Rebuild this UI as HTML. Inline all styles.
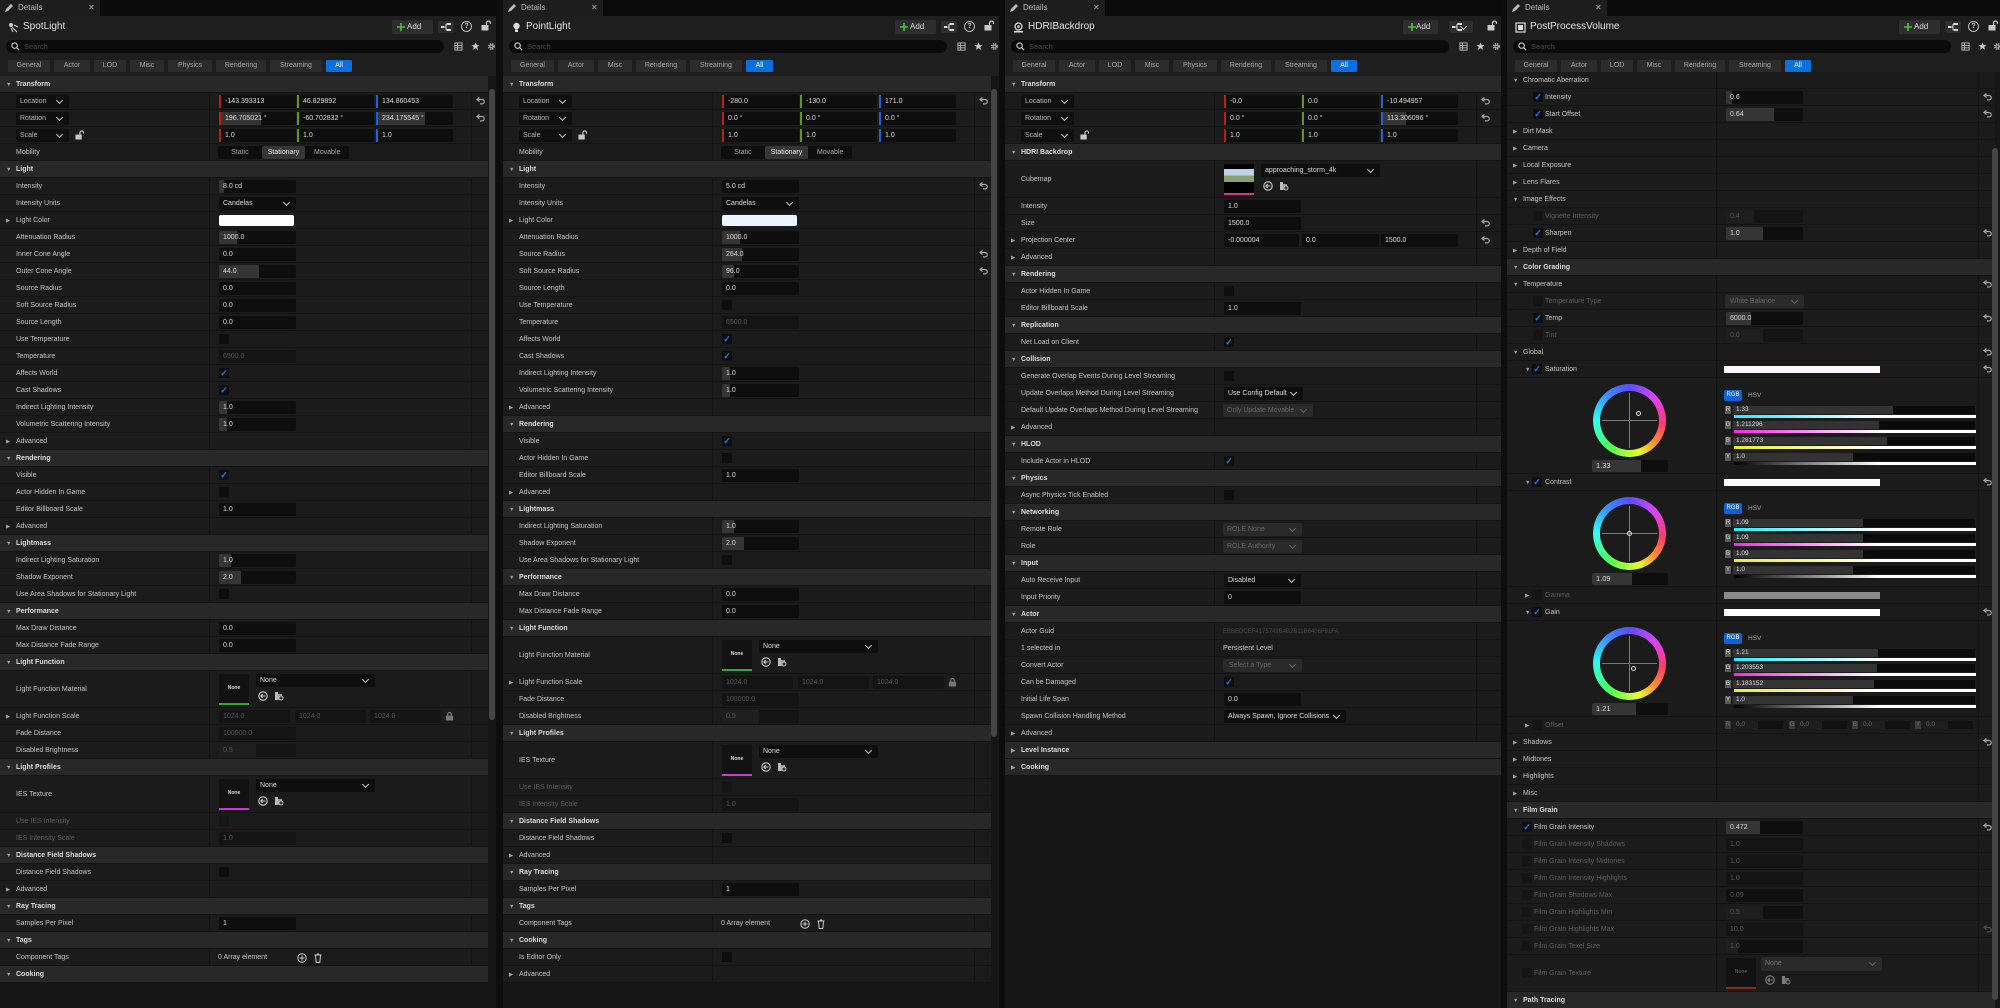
<!DOCTYPE html>
<html><head><meta charset="utf-8">
<style>
*{margin:0;padding:0;box-sizing:border-box}
body{width:2000px;height:1008px;background:#0d0d0d;overflow:hidden;font-family:"Liberation Sans",sans-serif;font-size:7px;color:#c4c4c4;position:relative}
.p{position:absolute;top:0;width:496px;height:1008px;background:#161616;overflow:hidden}
.tb{position:absolute;left:0;top:0;right:0;height:16px;background:#0b0b0b}
.tab{position:absolute;left:0;top:0;width:100px;height:16px;background:#1d1d1d;color:#bbb;font-size:8px;line-height:15px;padding-left:18px}
.tab .pc{position:absolute;left:4px;top:3px;width:10px;height:10px}
.tab .cl{position:absolute;left:88px;top:0;color:#aaa;font-size:8px}
.top{position:absolute;top:16px;left:0;right:0;height:60px;background:#1e1e1e;z-index:2}
.ttl{position:absolute;left:23px;top:4px;font-size:10px;color:#e2e2e2;line-height:14px}
.tic{position:absolute;left:8px;top:6px;width:11px;height:11px}
.add{position:absolute;left:392px;top:4px;width:41px;height:14px;background:#2d2d2d;border-radius:2px;font-size:8px;line-height:14px;color:#ddd;padding-left:15px}
.add svg{position:absolute;left:5px;top:3px;width:8px;height:8px}
.hi{position:absolute;left:438px;top:5px;width:16px;height:12px;background:#2d2d2d;border-radius:2px}
.hi svg{position:absolute;left:3px;top:2px;width:10px;height:8px}
.qm{position:absolute;left:461px;top:5px;width:11px;height:11px;border:1.2px solid #bbb;border-radius:50%;font-size:7px;line-height:9px;text-align:center;color:#ccc;font-weight:bold}
.tlk{position:absolute;left:481px;top:4px;width:10px;height:11px}
.srch{position:absolute;left:6px;top:24px;width:438px;height:13px;background:#0b0b0b;border-radius:7px;color:#4a4a4a;font-size:7.5px;line-height:13px;padding-left:18px}
.srch svg{position:absolute;left:5px;top:2px;width:9px;height:9px}
.si{position:absolute;top:26px;width:9px;height:9px}
.flt{position:absolute;top:44px;left:8px;display:flex;gap:4px}
.flt span{height:12px;line-height:12px;background:#2b2b2b;color:#a8a8a8;font-size:7px;text-align:center;border-radius:1px}
.flt span.al{background:#0a6fe0;color:#fff}
.rows{position:absolute;top:76px;left:0;width:488px}
.r{position:relative;height:17px;line-height:18px;padding-left:16px;white-space:nowrap;background:#1b1b1b linear-gradient(90deg,transparent 209px,#131313 209px,#131313 210px,transparent 210px,transparent 471px,#131313 471px,#131313 472px,transparent 472px);border-bottom:1px solid #141414}
.t{height:37px;line-height:38px}
.h{background:#282828;font-weight:bold;color:#dcdcdc}
.r>i{position:absolute;left:6px;top:0;font-style:normal;font-size:5.5px;color:#a0a0a0}
.dm{color:#5c5c5c}
.f{position:absolute;left:219px;top:2px;width:77px;height:13px;line-height:13px;background:#0e0e0e;border-radius:2px;padding-left:4px;color:#dcdcdc;font-weight:normal}
.f.dm{color:#555;background:#141414}
.a1{left:219px;border-left:2px solid #b32310;border-radius:0 2px 2px 0}
.a2{left:297px;border-left:2px solid #5d9a12;border-radius:0 2px 2px 0}
.a3{left:376px;border-left:2px solid #1d63d6;border-radius:0 2px 2px 0}
.d::after{content:"";position:absolute;right:7px;top:3px;width:4px;height:4px;border-right:1.3px solid #ccc;border-bottom:1.3px solid #ccc;transform:rotate(45deg)}
.d.dm{background:#2a2a2a}
.d.dm::after{border-color:#666}
.b{position:absolute;left:16px;top:2px;width:53px;height:13px;line-height:13px;background:#0f0f0f;border-radius:2px;padding-left:4px;color:#bbb}
.c{position:absolute;left:219px;top:3px;width:10px;height:10px;background:#0e0e0e;border-radius:1px;line-height:10px;text-align:center;color:#1f7ef0;font-weight:bold;font-size:9px}
.c.dm{background:#151515}
.x{position:absolute;left:475px;top:4px;width:10px;height:9px}
.wb{position:absolute;left:219px;top:3px;width:75px;height:11px;background:#fff;border-radius:2px}
.seg{position:absolute;left:218px;top:2px;width:131px;height:13px;background:#0e0e0e;display:flex;border-radius:2px;line-height:13px}
.seg span{flex:1;text-align:center;color:#aaa}
.seg span.on{background:#363636;color:#eee;border-radius:2px}
.th{position:absolute;left:219px;top:3px;width:30px;height:31px;background:#121212;border-bottom:2px solid #33a83a;font-size:5px;color:#ddd;text-align:center;line-height:28px;font-weight:bold}
.tf{left:256px;top:3px;width:119px}
.ib{position:absolute;top:20px;width:10px;height:10px}
.sb{position:absolute;width:6px;background:#454545;border-radius:3px}
.txt{position:absolute;left:218px;top:0}
.w{position:relative;height:96px;background:#1b1b1b linear-gradient(90deg,transparent 209px,#131313 209px,#131313 210px,transparent 210px,transparent 471px,#131313 471px,#131313 472px,transparent 472px);border-bottom:1px solid #141414}
.wh{position:absolute;left:86px;top:6px;width:73px;height:73px;border-radius:50%;background:conic-gradient(#5a4cff,#d644ff 45deg,#ff3a70 95deg,#ff8a2a 130deg,#e6ff30 165deg,#50ff50 215deg,#30ffee 270deg,#3a8cff 320deg,#5a4cff)}
.wh::after{content:"";position:absolute;left:7px;top:7px;width:59px;height:59px;border-radius:50%;background:#1b1b1b}
.hl{position:absolute;left:95px;top:42px;width:55px;height:1px;background:#7a7a7a;z-index:1}
.vl{position:absolute;left:122px;top:15px;width:1px;height:55px;background:#7a7a7a;z-index:1}
.dot{position:absolute;width:5px;height:5px;border:1px solid #ddd;border-radius:50%;z-index:2}
.wv{position:absolute;left:85px;top:82px;width:76px;height:12px;line-height:12px;padding-left:4px;color:#ddd;border-radius:2px;font-size:7.5px}
.rgb{position:absolute;left:217px;top:12px;width:18px;height:11px;background:#0a64d8;color:#fff;font-size:6px;text-align:center;line-height:11px;border-radius:2px}
.hsv{position:absolute;left:241px;top:12px;line-height:11px;color:#aaa;font-size:6.5px}
.sl{position:absolute;left:218px;width:250px;height:13px;line-height:8px}
.sl .lb{position:absolute;left:0;top:0;width:6px;height:8px;background:#5a5a5a;color:#ddd;font-size:6px;line-height:8px;text-align:center}
.sl .bar{position:absolute;left:8px;top:0;width:242px;height:8px;background:#0b0b0b;line-height:8px;padding-left:3px;color:#ddd;font-size:6.5px}
.sl .cb{position:absolute;left:9px;top:9px;width:242px;height:3px}
.wbar{position:absolute;left:217px;top:5px;width:156px;height:7px;background:#fff}
</style></head><body>
<svg width="0" height="0" style="position:absolute">
<defs>
<symbol id="rs" viewBox="0 0 10 9"><path d="M3.5 2.5H7a2.2 2.2 0 0 1 0 4.4H5" stroke="#a8a8a8" stroke-width="1.2" fill="none"/><path d="M4.5 0.5L2 2.5l2.5 2" stroke="#a8a8a8" stroke-width="1.2" fill="none"/></symbol>
<symbol id="lk" viewBox="0 0 10 11"><rect x="0.5" y="5" width="7" height="5.5" fill="#c8c8c8"/><path d="M5.5 5V3a2 2 0 0 1 4 0v1" stroke="#c8c8c8" stroke-width="1.3" fill="none"/></symbol>
<symbol id="lc" viewBox="0 0 10 11"><rect x="1" y="5" width="8" height="5.5" fill="#777"/><path d="M3 5V3.5a2 2 0 0 1 4 0V5" stroke="#777" stroke-width="1.3" fill="none"/></symbol>
<symbol id="br" viewBox="0 0 10 10"><circle cx="5" cy="5" r="4.2" stroke="#ccc" stroke-width="1.1" fill="none"/><path d="M7.5 5H3M4.8 3L2.8 5l2 2" stroke="#ccc" stroke-width="1.1" fill="none"/></symbol>
<symbol id="fo" viewBox="0 0 10 10"><path d="M1 1h3v8H1z" fill="#bbb"/><rect x="4" y="3" width="4" height="6" fill="#999"/><circle cx="7" cy="7" r="2" stroke="#ddd" fill="#333" stroke-width="0.8"/></symbol>
<symbol id="pl" viewBox="0 0 10 10"><circle cx="5" cy="5" r="4.2" stroke="#ccc" stroke-width="1" fill="none"/><path d="M5 2.5v5M2.5 5h5" stroke="#ccc" stroke-width="1"/></symbol>
<symbol id="tr" viewBox="0 0 10 10"><path d="M1.5 2h7M4 1h2M2.5 2.5l.7 7h3.6l.7-7" stroke="#ccc" stroke-width="1" fill="none"/></symbol>
<symbol id="pn" viewBox="0 0 10 10"><path d="M1 9l1-3 5-5 2 2-5 5z" fill="#bbb"/></symbol>
<symbol id="sr" viewBox="0 0 10 10"><circle cx="4" cy="4" r="3" stroke="#ccc" stroke-width="1.2" fill="none"/><path d="M6.2 6.2L9 9" stroke="#ccc" stroke-width="1.3"/></symbol>
<symbol id="gr" viewBox="0 0 10 10"><rect x="1" y="1" width="8" height="8" stroke="#bbb" fill="none"/><path d="M1 4h8M1 6.5h8M4 1v8" stroke="#bbb"/></symbol>
<symbol id="st" viewBox="0 0 10 10"><path d="M5 .5l1.3 3h3.2l-2.6 2 1 3.2L5 6.8 2.1 8.7l1-3.2-2.6-2h3.2z" fill="#c8c8c8"/></symbol>
<symbol id="ge" viewBox="0 0 10 10"><circle cx="5" cy="5" r="3" stroke="#bbb" stroke-width="1.6" fill="none" stroke-dasharray="1.4 1"/><circle cx="5" cy="5" r="1.6" stroke="#bbb" fill="none"/></symbol>
<symbol id="ad" viewBox="0 0 8 8"><path d="M4 0v8M0 4h8" stroke="#4cc43c" stroke-width="1.6"/></symbol>
<symbol id="hr" viewBox="0 0 10 8"><rect x="0" y="3" width="3" height="2" fill="#ddd"/><rect x="6" y="0" width="4" height="2" fill="#ddd"/><rect x="6" y="6" width="4" height="2" fill="#ddd"/><path d="M3 4h2M5 1v6M5 1h1M5 7h1" stroke="#ddd"/></symbol>
</defs></svg>

<!-- PANEL 1 -->
<div class="p" style="left:0">
<div class="tb"><div class="tab"><svg class="pc"><use href="#pn"/></svg>Details<span class="cl">✕</span></div></div>
<div class="top">
<svg class="tic" viewBox="0 0 11 11"><circle cx="3" cy="3" r="2" fill="#ccc"/><path d="M4 5l5 5M6 3l4 2M3 6l2 4" stroke="#ccc"/></svg>
<div class="ttl">SpotLight</div>
<div class="add"><svg><use href="#ad"/></svg>Add</div><div class="hi"><svg><use href="#hr"/></svg></div><div class="qm">?</div><svg class="tlk"><use href="#lk"/></svg>
<div class="srch"><svg><use href="#sr"/></svg>Search</div>
<svg class="si" style="left:454px"><use href="#gr"/></svg><svg class="si" style="left:471px"><use href="#st"/></svg><svg class="si" style="left:487px"><use href="#ge"/></svg>
<div class="flt"><span style="width:42px">General</span><span style="width:36px">Actor</span><span style="width:32px">LOD</span><span style="width:34px">Misc</span><span style="width:44px">Physics</span><span style="width:50px">Rendering</span><span style="width:52px">Streaming</span><span class="al" style="width:26px">All</span></div>
</div>
<div class="rows">
<div class="r h"><i>▼</i>Transform</div>
<div class="r"><span class="b d">Location</span><span class="f a1">-143.393313</span><span class="f a2">46.829892</span><span class="f a3">134.860453</span><svg class="x"><use href="#rs"/></svg></div>
<div class="r"><span class="b d">Rotation</span><span class="f a1" style="background:linear-gradient(90deg,#353535 40px,#0e0e0e 40px)">196.705021 °</span><span class="f a2">-60.702832 °</span><span class="f a3" style="background:linear-gradient(90deg,#353535 47px,#0e0e0e 47px)">234.175545 °</span><svg class="x"><use href="#rs"/></svg></div>
<div class="r"><span class="b d">Scale</span><svg style="position:absolute;left:75px;top:3px;width:9px;height:10px"><use href="#lk"/></svg><span class="f a1">1.0</span><span class="f a2">1.0</span><span class="f a3">1.0</span></div>
<div class="r">Mobility<span class="seg"><span>Static</span><span class="on">Stationary</span><span>Movable</span></span></div>
<div class="r h"><i>▼</i>Light</div>
<div class="r">Intensity<span class="f" style="background:linear-gradient(90deg,#353535 5px,#0e0e0e 5px)">8.0 cd</span></div>
<div class="r">Intensity Units<span class="f d">Candelas</span></div>
<div class="r"><i>▶</i>Light Color<span class="wb"></span></div>
<div class="r">Attenuation Radius<span class="f" style="background:linear-gradient(90deg,#353535 18px,#0e0e0e 18px)">1000.0</span></div>
<div class="r">Inner Cone Angle<span class="f">0.0</span></div>
<div class="r">Outer Cone Angle<span class="f" style="background:linear-gradient(90deg,#353535 40px,#0e0e0e 40px)">44.0</span></div>
<div class="r">Source Radius<span class="f">0.0</span></div>
<div class="r">Soft Source Radius<span class="f">0.0</span></div>
<div class="r">Source Length<span class="f">0.0</span></div>
<div class="r">Use Temperature<span class="c"></span></div>
<div class="r">Temperature<span class="f dm">6500.0</span></div>
<div class="r">Affects World<span class="c">✓</span></div>
<div class="r">Cast Shadows<span class="c">✓</span></div>
<div class="r">Indirect Lighting Intensity<span class="f" style="background:linear-gradient(90deg,#353535 8px,#0e0e0e 8px)">1.0</span></div>
<div class="r">Volumetric Scattering Intensity<span class="f" style="background:linear-gradient(90deg,#353535 8px,#0e0e0e 8px)">1.0</span></div>
<div class="r"><i>▶</i>Advanced</div>
<div class="r h"><i>▼</i>Rendering</div>
<div class="r">Visible<span class="c">✓</span></div>
<div class="r">Actor Hidden In Game<span class="c"></span></div>
<div class="r">Editor Billboard Scale<span class="f">1.0</span></div>
<div class="r"><i>▶</i>Advanced</div>
<div class="r h"><i>▼</i>Lightmass</div>
<div class="r">Indirect Lighting Saturation<span class="f" style="background:linear-gradient(90deg,#353535 12px,#0e0e0e 12px)">1.0</span></div>
<div class="r">Shadow Exponent<span class="f" style="background:linear-gradient(90deg,#353535 22px,#0e0e0e 22px)">2.0</span></div>
<div class="r">Use Area Shadows for Stationary Light<span class="c"></span></div>
<div class="r h"><i>▼</i>Performance</div>
<div class="r">Max Draw Distance<span class="f">0.0</span></div>
<div class="r">Max Distance Fade Range<span class="f">0.0</span></div>
<div class="r h"><i>▼</i>Light Function</div>
<div class="r t">Light Function Material<span class="th">None</span><span class="f d tf">None</span><svg class="ib" style="left:258px"><use href="#br"/></svg><svg class="ib" style="left:274px"><use href="#fo"/></svg></div>
<div class="r"><i>▶</i>Light Function Scale<span class="f dm" style="width:71px">1024.0</span><span class="f dm" style="left:295px;width:71px">1024.0</span><span class="f dm" style="left:370px;width:71px">1024.0</span><svg style="position:absolute;left:445px;top:3px;width:9px;height:10px"><use href="#lc"/></svg></div>
<div class="r">Fade Distance<span class="f dm">100000.0</span></div>
<div class="r">Disabled Brightness<span class="f dm" style="background:linear-gradient(90deg,#1e1e1e 37px,#141414 37px)">0.5</span></div>
<div class="r h"><i>▼</i>Light Profiles</div>
<div class="r t">IES Texture<span class="th" style="border-color:#c83ad0">None</span><span class="f d tf">None</span><svg class="ib" style="left:258px"><use href="#br"/></svg><svg class="ib" style="left:274px"><use href="#fo"/></svg></div>
<div class="r dm">Use IES Intensity<span class="c dm"></span></div>
<div class="r dm">IES Intensity Scale<span class="f dm">1.0</span></div>
<div class="r h"><i>▼</i>Distance Field Shadows</div>
<div class="r">Distance Field Shadows<span class="c"></span></div>
<div class="r"><i>▶</i>Advanced</div>
<div class="r h"><i>▼</i>Ray Tracing</div>
<div class="r">Samples Per Pixel<span class="f">1</span></div>
<div class="r h"><i>▼</i>Tags</div>
<div class="r">Component Tags<span class="txt">0 Array element</span><svg class="ib" style="left:297px;top:4px"><use href="#pl"/></svg><svg class="ib" style="left:313px;top:4px"><use href="#tr"/></svg></div>
<div class="r h"><i>▼</i>Cooking</div>
</div>
<div class="sb" style="left:489px;top:89px;height:631px"></div>
</div>

<!-- PANEL 2 -->
<div class="p" style="left:503px">
<div class="tb"><div class="tab"><svg class="pc"><use href="#pn"/></svg>Details<span class="cl">✕</span></div></div>
<div class="top">
<svg class="tic" viewBox="0 0 11 11"><circle cx="5.5" cy="4" r="3.2" fill="#ddd"/><rect x="4" y="7.5" width="3" height="2.5" fill="#ddd"/></svg>
<div class="ttl">PointLight</div>
<div class="add"><svg><use href="#ad"/></svg>Add</div><div class="hi"><svg><use href="#hr"/></svg></div><div class="qm">?</div><svg class="tlk"><use href="#lk"/></svg>
<div class="srch"><svg><use href="#sr"/></svg>Search</div>
<svg class="si" style="left:454px"><use href="#gr"/></svg><svg class="si" style="left:471px"><use href="#st"/></svg><svg class="si" style="left:487px"><use href="#ge"/></svg>
<div class="flt"><span style="width:43px">General</span><span style="width:36px">Actor</span><span style="width:34px">Misc</span><span style="width:50px">Rendering</span><span style="width:52px">Streaming</span><span class="al" style="width:27px">All</span></div>
</div>
<div class="rows">
<div class="r h"><i>▼</i>Transform</div>
<div class="r"><span class="b d">Location</span><span class="f a1">-280.0</span><span class="f a2">-130.0</span><span class="f a3">171.0</span><svg class="x"><use href="#rs"/></svg></div>
<div class="r"><span class="b d">Rotation</span><span class="f a1">0.0 °</span><span class="f a2">0.0 °</span><span class="f a3">0.0 °</span></div>
<div class="r"><span class="b d">Scale</span><svg style="position:absolute;left:75px;top:3px;width:9px;height:10px"><use href="#lk"/></svg><span class="f a1">1.0</span><span class="f a2">1.0</span><span class="f a3">1.0</span></div>
<div class="r">Mobility<span class="seg"><span>Static</span><span class="on">Stationary</span><span>Movable</span></span></div>
<div class="r h"><i>▼</i>Light</div>
<div class="r">Intensity<span class="f">5.0 cd</span><svg class="x"><use href="#rs"/></svg></div>
<div class="r">Intensity Units<span class="f d">Candelas</span></div>
<div class="r"><i>▶</i>Light Color<span class="wb" style="background:#eef4ff"></span></div>
<div class="r">Attenuation Radius<span class="f" style="background:linear-gradient(90deg,#353535 18px,#0e0e0e 18px)">1000.0</span></div>
<div class="r">Source Radius<span class="f" style="background:linear-gradient(90deg,#353535 20px,#0e0e0e 20px)">264.0</span><svg class="x"><use href="#rs"/></svg></div>
<div class="r">Soft Source Radius<span class="f" style="background:linear-gradient(90deg,#353535 12px,#0e0e0e 12px)">96.0</span><svg class="x"><use href="#rs"/></svg></div>
<div class="r">Source Length<span class="f">0.0</span></div>
<div class="r">Use Temperature<span class="c"></span></div>
<div class="r">Temperature<span class="f dm">6500.0</span></div>
<div class="r">Affects World<span class="c">✓</span></div>
<div class="r">Cast Shadows<span class="c">✓</span></div>
<div class="r">Indirect Lighting Intensity<span class="f" style="background:linear-gradient(90deg,#353535 8px,#0e0e0e 8px)">1.0</span></div>
<div class="r">Volumetric Scattering Intensity<span class="f" style="background:linear-gradient(90deg,#353535 8px,#0e0e0e 8px)">1.0</span></div>
<div class="r"><i>▶</i>Advanced</div>
<div class="r h"><i>▼</i>Rendering</div>
<div class="r">Visible<span class="c">✓</span></div>
<div class="r">Actor Hidden In Game<span class="c"></span></div>
<div class="r">Editor Billboard Scale<span class="f">1.0</span></div>
<div class="r"><i>▶</i>Advanced</div>
<div class="r h"><i>▼</i>Lightmass</div>
<div class="r">Indirect Lighting Saturation<span class="f" style="background:linear-gradient(90deg,#353535 12px,#0e0e0e 12px)">1.0</span></div>
<div class="r">Shadow Exponent<span class="f" style="background:linear-gradient(90deg,#353535 22px,#0e0e0e 22px)">2.0</span></div>
<div class="r">Use Area Shadows for Stationary Light<span class="c"></span></div>
<div class="r h"><i>▼</i>Performance</div>
<div class="r">Max Draw Distance<span class="f">0.0</span></div>
<div class="r">Max Distance Fade Range<span class="f">0.0</span></div>
<div class="r h"><i>▼</i>Light Function</div>
<div class="r t">Light Function Material<span class="th">None</span><span class="f d tf">None</span><svg class="ib" style="left:258px"><use href="#br"/></svg><svg class="ib" style="left:274px"><use href="#fo"/></svg></div>
<div class="r"><i>▶</i>Light Function Scale<span class="f dm" style="width:71px">1024.0</span><span class="f dm" style="left:295px;width:71px">1024.0</span><span class="f dm" style="left:370px;width:71px">1024.0</span><svg style="position:absolute;left:445px;top:3px;width:9px;height:10px"><use href="#lc"/></svg></div>
<div class="r">Fade Distance<span class="f dm">100000.0</span></div>
<div class="r">Disabled Brightness<span class="f dm" style="background:linear-gradient(90deg,#1e1e1e 37px,#141414 37px)">0.5</span></div>
<div class="r h"><i>▼</i>Light Profiles</div>
<div class="r t">IES Texture<span class="th" style="border-color:#c83ad0">None</span><span class="f d tf">None</span><svg class="ib" style="left:258px"><use href="#br"/></svg><svg class="ib" style="left:274px"><use href="#fo"/></svg></div>
<div class="r dm">Use IES Intensity<span class="c dm"></span></div>
<div class="r dm">IES Intensity Scale<span class="f dm">1.0</span></div>
<div class="r h"><i>▼</i>Distance Field Shadows</div>
<div class="r">Distance Field Shadows<span class="c"></span></div>
<div class="r"><i>▶</i>Advanced</div>
<div class="r h"><i>▼</i>Ray Tracing</div>
<div class="r">Samples Per Pixel<span class="f">1</span></div>
<div class="r h"><i>▼</i>Tags</div>
<div class="r">Component Tags<span class="txt">0 Array element</span><svg class="ib" style="left:297px;top:4px"><use href="#pl"/></svg><svg class="ib" style="left:313px;top:4px"><use href="#tr"/></svg></div>
<div class="r h"><i>▼</i>Cooking</div>
<div class="r">Is Editor Only<span class="c"></span></div>
<div class="r"><i>▶</i>Advanced</div>
</div>
<div class="sb" style="left:488px;top:89px;height:648px"></div>
</div>

<!-- PANEL 3 -->
<div class="p" style="left:1005px">
<div class="tb"><div class="tab"><svg class="pc"><use href="#pn"/></svg>Details<span class="cl">✕</span></div></div>
<div class="top">
<svg class="tic" viewBox="0 0 11 11"><circle cx="5.5" cy="4.5" r="3.5" fill="none" stroke="#ddd" stroke-width="1.3"/><circle cx="5.5" cy="4.5" r="1.3" fill="#ddd"/><rect x="1" y="9" width="9" height="1.5" fill="#ddd"/></svg>
<div class="ttl">HDRIBackdrop</div>
<div class="add" style="left:398px;width:35px;padding-left:13px"><svg><use href="#ad"/></svg>Add</div><div class="hi" style="left:444px;width:24px"><svg><use href="#hr"/></svg><span class="d" style="position:absolute;left:12px;top:0;width:12px;height:12px"></span></div><svg class="tlk" style="left:482px"><use href="#lk"/></svg>
<div class="srch"><svg><use href="#sr"/></svg>Search</div>
<svg class="si" style="left:454px"><use href="#gr"/></svg><svg class="si" style="left:471px"><use href="#st"/></svg><svg class="si" style="left:487px"><use href="#ge"/></svg>
<div class="flt"><span style="width:42px">General</span><span style="width:36px">Actor</span><span style="width:32px">LOD</span><span style="width:34px">Misc</span><span style="width:44px">Physics</span><span style="width:50px">Rendering</span><span style="width:52px">Streaming</span><span class="al" style="width:26px">All</span></div>
</div>
<div class="rows" style="width:496px">
<div class="r h"><i>▼</i>Transform</div>
<div class="r"><span class="b d">Location</span><span class="f a1">-0.0</span><span class="f a2">0.0</span><span class="f a3">-10.494957</span><svg class="x"><use href="#rs"/></svg></div>
<div class="r"><span class="b d">Rotation</span><span class="f a1">0.0 °</span><span class="f a2">0.0 °</span><span class="f a3" style="background:linear-gradient(90deg,#353535 23px,#0e0e0e 23px)">113.306096 °</span><svg class="x"><use href="#rs"/></svg></div>
<div class="r"><span class="b d">Scale</span><svg style="position:absolute;left:75px;top:3px;width:9px;height:10px"><use href="#lk"/></svg><span class="f a1">1.0</span><span class="f a2">1.0</span><span class="f a3">1.0</span></div>
<div class="r h"><i>▼</i>HDRI Backdrop</div>
<div class="r t">Cubemap<span class="th" style="border-color:#d03a8a;background:linear-gradient(#000 0 18%,#bcd3ea 18% 40%,#8aa070 40% 62%,#000 62%)"></span><span class="f d tf">approaching_storm_4k</span><svg class="ib" style="left:258px"><use href="#br"/></svg><svg class="ib" style="left:274px"><use href="#fo"/></svg></div>
<div class="r">Intensity<span class="f">1.0</span></div>
<div class="r">Size<span class="f">1500.0</span><svg class="x"><use href="#rs"/></svg></div>
<div class="r"><i>▶</i>Projection Center<span class="f" style="width:75px">-0.000004</span><span class="f" style="left:297px;width:77px">0.0</span><span class="f" style="left:376px;width:77px">1500.0</span><svg class="x"><use href="#rs"/></svg></div>
<div class="r"><i>▶</i>Advanced</div>
<div class="r h"><i>▼</i>Rendering</div>
<div class="r">Actor Hidden In Game<span class="c"></span></div>
<div class="r">Editor Billboard Scale<span class="f">1.0</span></div>
<div class="r h"><i>▼</i>Replication</div>
<div class="r">Net Load on Client<span class="c">✓</span></div>
<div class="r h"><i>▼</i>Collision</div>
<div class="r">Generate Overlap Events During Level Streaming<span class="c"></span></div>
<div class="r">Update Overlaps Method During Level Streaming<span class="f d" style="width:79px">Use Config Default</span></div>
<div class="r">Default Update Overlaps Method During Level Streaming<span class="f d dm" style="width:90px;left:218px;color:#666">Only Update Movable</span></div>
<div class="r"><i>▶</i>Advanced</div>
<div class="r h"><i>▼</i>HLOD</div>
<div class="r">Include Actor in HLOD<span class="c">✓</span></div>
<div class="r h"><i>▼</i>Physics</div>
<div class="r">Async Physics Tick Enabled<span class="c"></span></div>
<div class="r h"><i>▼</i>Networking</div>
<div class="r">Remote Role<span class="f d dm" style="width:79px;left:218px;color:#666">ROLE None</span></div>
<div class="r">Role<span class="f d dm" style="width:79px;left:218px;color:#666">ROLE Authority</span></div>
<div class="r h"><i>▼</i>Input</div>
<div class="r">Auto Receive Input<span class="f d">Disabled</span></div>
<div class="r">Input Priority<span class="f">0</span></div>
<div class="r h"><i>▼</i>Actor</div>
<div class="r">Actor Guid<span class="txt" style="color:#4a4a4a;font-size:6px">EBBBDCEF4175749B4B2B11B6406F91FA</span></div>
<div class="r">1 selected in<span class="txt" style="color:#ccc">Persistent Level</span></div>
<div class="r">Convert Actor<span class="f d dm" style="width:79px;left:218px;color:#666;padding-left:6px">Select a Type</span></div>
<div class="r">Can be Damaged<span class="c">✓</span></div>
<div class="r">Initial Life Span<span class="f">0.0</span></div>
<div class="r">Spawn Collision Handling Method<span class="f d" style="width:122px">Always Spawn, Ignore Collisions</span></div>
<div class="r"><i>▶</i>Advanced</div>
<div class="r h"><i>▶</i>Level Instance</div>
<div class="r h"><i>▶</i>Cooking</div>
</div>
</div>

<!-- PANEL 4 -->
<div class="p" style="left:1507px;width:493px">
<div class="tb"><div class="tab"><svg class="pc"><use href="#pn"/></svg>Details<span class="cl">✕</span></div></div>
<div class="top" style="height:56px">
<svg class="tic" viewBox="0 0 11 11"><rect x="1" y="1" width="9" height="9" fill="none" stroke="#ddd" stroke-width="1.2"/><rect x="3" y="3" width="5" height="5" fill="#ddd"/></svg>
<div class="ttl">PostProcessVolume</div>
<div class="add"><svg><use href="#ad"/></svg>Add</div><div class="hi"><svg><use href="#hr"/></svg></div><div class="qm">?</div><svg class="tlk"><use href="#lk"/></svg>
<div class="srch"><svg><use href="#sr"/></svg>Search</div>
<svg class="si" style="left:454px"><use href="#gr"/></svg><svg class="si" style="left:471px"><use href="#st"/></svg><svg class="si" style="left:486px"><use href="#ge"/></svg>
<div class="flt"><span style="width:42px">General</span><span style="width:36px">Actor</span><span style="width:32px">LOD</span><span style="width:34px">Misc</span><span style="width:50px">Rendering</span><span style="width:52px">Streaming</span><span class="al" style="width:26px">All</span></div>
</div>
<div class="rows" style="top:72px">
<div class="r"><i>▼</i>Chromatic Aberration</div>
<div class="r" style="padding-left:38px"><span class="c" style="left:26px">✓</span>Intensity<span class="f" style="background:linear-gradient(90deg,#353535 6px,#0e0e0e 6px)">0.6</span><svg class="x"><use href="#rs"/></svg></div>
<div class="r" style="padding-left:38px"><span class="c" style="left:26px">✓</span>Start Offset<span class="f" style="background:linear-gradient(90deg,#353535 48px,#0e0e0e 48px)">0.64</span><svg class="x"><use href="#rs"/></svg></div>
<div class="r"><i>▶</i>Dirt Mask</div>
<div class="r"><i>▶</i>Camera</div>
<div class="r"><i>▶</i>Local Exposure</div>
<div class="r"><i>▶</i>Lens Flares</div>
<div class="r"><i>▼</i>Image Effects</div>
<div class="r dm" style="padding-left:38px"><span class="c dm" style="left:26px"></span>Vignette Intensity<span class="f dm" style="background:linear-gradient(90deg,#1e1e1e 28px,#141414 28px)">0.4</span></div>
<div class="r" style="padding-left:38px"><span class="c" style="left:26px">✓</span>Sharpen<span class="f" style="background:linear-gradient(90deg,#353535 37px,#0e0e0e 37px)">1.0</span><svg class="x"><use href="#rs"/></svg></div>
<div class="r"><i>▶</i>Depth of Field</div>
<div class="r h"><i>▼</i>Color Grading</div>
<div class="r"><i>▼</i>Temperature<svg class="x"><use href="#rs"/></svg></div>
<div class="r dm" style="padding-left:38px"><span class="c dm" style="left:26px"></span>Temperature Type<span class="f d dm" style="left:218px;width:79px;color:#666;padding-left:5px">White Balance</span></div>
<div class="r" style="padding-left:38px"><span class="c" style="left:26px">✓</span>Temp<span class="f" style="background:linear-gradient(90deg,#353535 25px,#0e0e0e 25px)">6000.0</span><svg class="x"><use href="#rs"/></svg></div>
<div class="r dm" style="padding-left:38px"><span class="c dm" style="left:26px"></span>Tint<span class="f dm" style="background:linear-gradient(90deg,#1e1e1e 37px,#141414 37px)">0.0</span></div>
<div class="r"><i>▼</i>Global<svg class="x"><use href="#rs"/></svg></div>
<div class="r" style="padding-left:38px"><i style="left:18px">▼</i><span class="c" style="left:25px">✓</span>Saturation<span class="wbar" style="background:#fff6fb"></span><svg class="x"><use href="#rs"/></svg></div>
<div class="w"><div class="wh"></div><div class="hl"></div><div class="vl"></div><div class="dot" style="left:129px;top:33px"></div>
<div class="wv" style="background:linear-gradient(90deg,#353535 49px,#0e0e0e 49px)">1.33</div>
<div class="rgb">RGB</div><div class="hsv">HSV</div>
<div class="sl" style="top:27.5px"><div class="lb">R</div><div class="bar" style="background:linear-gradient(90deg,#333 160px,#0b0b0b 160px)">1.33</div><div class="cb" style="background:linear-gradient(90deg,#2ef 0,#fff 60%)"></div></div>
<div class="sl" style="top:43.2px"><div class="lb">G</div><div class="bar" style="background:linear-gradient(90deg,#333 146px,#0b0b0b 146px)">1.211296</div><div class="cb" style="background:linear-gradient(90deg,#f2e 0,#fff 60%)"></div></div>
<div class="sl" style="top:58.9px"><div class="lb">B</div><div class="bar" style="background:linear-gradient(90deg,#333 154px,#0b0b0b 154px)">1.281773</div><div class="cb" style="background:linear-gradient(90deg,#ee2 0,#fff 60%)"></div></div>
<div class="sl" style="top:74.6px"><div class="lb">Y</div><div class="bar" style="background:linear-gradient(90deg,#333 120px,#0b0b0b 120px)">1.0</div><div class="cb" style="background:linear-gradient(90deg,#000 0,#fff 60%)"></div></div>
</div>
<div class="r" style="padding-left:38px"><i style="left:18px">▼</i><span class="c" style="left:25px">✓</span>Contrast<span class="wbar"></span><svg class="x"><use href="#rs"/></svg></div>
<div class="w"><div class="wh"></div><div class="hl"></div><div class="vl"></div><div class="dot" style="left:119.5px;top:39.5px"></div>
<div class="wv" style="background:linear-gradient(90deg,#353535 40px,#0e0e0e 40px)">1.09</div>
<div class="rgb">RGB</div><div class="hsv">HSV</div>
<div class="sl" style="top:27.5px"><div class="lb">R</div><div class="bar" style="background:linear-gradient(90deg,#333 130px,#0b0b0b 130px)">1.09</div><div class="cb" style="background:linear-gradient(90deg,#2ef 0,#fff 60%)"></div></div>
<div class="sl" style="top:43.2px"><div class="lb">G</div><div class="bar" style="background:linear-gradient(90deg,#333 130px,#0b0b0b 130px)">1.09</div><div class="cb" style="background:linear-gradient(90deg,#f2e 0,#fff 60%)"></div></div>
<div class="sl" style="top:58.9px"><div class="lb">B</div><div class="bar" style="background:linear-gradient(90deg,#333 130px,#0b0b0b 130px)">1.09</div><div class="cb" style="background:linear-gradient(90deg,#ee2 0,#fff 60%)"></div></div>
<div class="sl" style="top:74.6px"><div class="lb">Y</div><div class="bar" style="background:linear-gradient(90deg,#333 120px,#0b0b0b 120px)">1.0</div><div class="cb" style="background:linear-gradient(90deg,#000 0,#fff 60%)"></div></div>
</div>
<div class="r dm" style="padding-left:38px"><i style="left:18px">▶</i><span class="c dm" style="left:25px"></span>Gamma<span class="wbar" style="background:#8a8a8a"></span></div>
<div class="r" style="padding-left:38px"><i style="left:18px">▼</i><span class="c" style="left:25px">✓</span>Gain<span class="wbar"></span><svg class="x"><use href="#rs"/></svg></div>
<div class="w"><div class="wh"></div><div class="hl"></div><div class="vl"></div><div class="dot" style="left:124px;top:45px"></div>
<div class="wv" style="background:linear-gradient(90deg,#353535 44px,#0e0e0e 44px)">1.21</div>
<div class="rgb">RGB</div><div class="hsv">HSV</div>
<div class="sl" style="top:27.5px"><div class="lb">R</div><div class="bar" style="background:linear-gradient(90deg,#333 145px,#0b0b0b 145px)">1.21</div><div class="cb" style="background:linear-gradient(90deg,#2ef 0,#fff 60%)"></div></div>
<div class="sl" style="top:43.2px"><div class="lb">G</div><div class="bar" style="background:linear-gradient(90deg,#333 144px,#0b0b0b 144px)">1.203553</div><div class="cb" style="background:linear-gradient(90deg,#f2e 0,#fff 60%)"></div></div>
<div class="sl" style="top:58.9px"><div class="lb">B</div><div class="bar" style="background:linear-gradient(90deg,#333 141px,#0b0b0b 141px)">1.183152</div><div class="cb" style="background:linear-gradient(90deg,#ee2 0,#fff 60%)"></div></div>
<div class="sl" style="top:74.6px"><div class="lb">Y</div><div class="bar" style="background:linear-gradient(90deg,#333 120px,#0b0b0b 120px)">1.0</div><div class="cb" style="background:linear-gradient(90deg,#000 0,#fff 60%)"></div></div>
</div>
<div class="r dm" style="padding-left:38px"><i style="left:18px">▶</i><span class="c dm" style="left:25px"></span>Offset
<span class="sl" style="top:4px;width:58px"><span class="lb" style="background:#3a3a3a;color:#777">R</span><span class="bar" style="width:50px;color:#666;background:linear-gradient(90deg,#1e1e1e 25px,#121212 25px)">0.0</span></span>
<span class="sl" style="top:4px;left:282px;width:58px"><span class="lb" style="background:#3a3a3a;color:#777">G</span><span class="bar" style="width:50px;color:#666;background:linear-gradient(90deg,#1e1e1e 25px,#121212 25px)">0.0</span></span>
<span class="sl" style="top:4px;left:345px;width:58px"><span class="lb" style="background:#3a3a3a;color:#777">B</span><span class="bar" style="width:50px;color:#666;background:linear-gradient(90deg,#1e1e1e 25px,#121212 25px)">0.0</span></span>
<span class="sl" style="top:4px;left:408px;width:58px"><span class="lb" style="background:#3a3a3a;color:#777">Y</span><span class="bar" style="width:50px;color:#666;background:linear-gradient(90deg,#1e1e1e 25px,#121212 25px)">0.0</span></span></div>
<div class="r"><i>▶</i>Shadows<svg class="x"><use href="#rs"/></svg></div>
<div class="r"><i>▶</i>Midtones</div>
<div class="r"><i>▶</i>Highlights</div>
<div class="r"><i>▶</i>Misc</div>
<div class="r h"><i>▼</i>Film Grain</div>
<div class="r" style="padding-left:27px"><span class="c" style="left:15px">✓</span>Film Grain Intensity<span class="f" style="background:linear-gradient(90deg,#353535 34px,#0e0e0e 34px)">0.472</span><svg class="x"><use href="#rs"/></svg></div>
<div class="r dm" style="padding-left:27px"><span class="c dm" style="left:15px"></span>Film Grain Intensity Shadows<span class="f dm">1.0</span></div>
<div class="r dm" style="padding-left:27px"><span class="c dm" style="left:15px"></span>Film Grain Intensity Midtones<span class="f dm">1.0</span></div>
<div class="r dm" style="padding-left:27px"><span class="c dm" style="left:15px"></span>Film Grain Intensity Highlights<span class="f dm">1.0</span></div>
<div class="r dm" style="padding-left:27px"><span class="c dm" style="left:15px"></span>Film Grain Shadows Max<span class="f dm" style="background:#101010">0.09</span></div>
<div class="r dm" style="padding-left:27px"><span class="c dm" style="left:15px"></span>Film Grain Highlights Min<span class="f dm" style="background:linear-gradient(90deg,#1e1e1e 37px,#101010 37px)">0.5</span></div>
<div class="r dm" style="padding-left:27px"><span class="c dm" style="left:15px"></span>Film Grain Highlights Max<span class="f dm">10.0</span><svg class="x" style="opacity:.4"><use href="#rs"/></svg></div>
<div class="r dm" style="padding-left:27px"><span class="c dm" style="left:15px"></span>Film Grain Texel Size<span class="f dm" style="background:linear-gradient(90deg,#1e1e1e 12px,#101010 12px)">1.0</span></div>
<div class="r t dm" style="padding-left:27px"><span class="c dm" style="left:15px;top:13px"></span>Film Grain Texture<span class="th" style="border-color:#8a2a1a;color:#555">None</span><span class="f d dm tf" style="left:254px;width:121px;color:#777;top:2px;height:14px">None</span><svg class="ib" style="left:258px;opacity:.6"><use href="#br"/></svg><svg class="ib" style="left:274px;opacity:.6"><use href="#fo"/></svg></div>
<div class="r h"><i>▼</i>Path Tracing</div>
</div>
<div class="sb" style="left:485px;top:148px;height:852px"></div>
</div>
</body></html>
